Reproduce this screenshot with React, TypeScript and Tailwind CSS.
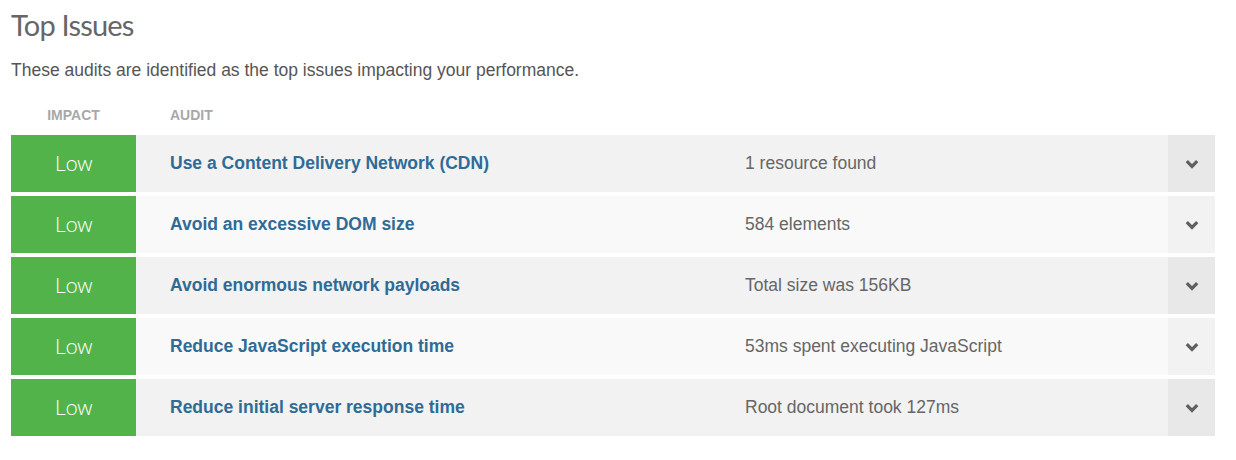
import React from "react";

const rows = [
  { title: "Use a Content Delivery Network (CDN)", detail: "1 resource found" },
  { title: "Avoid an excessive DOM size", detail: "584 elements" },
  { title: "Avoid enormous network payloads", detail: "Total size was 156KB" },
  { title: "Reduce JavaScript execution time", detail: "53ms spent executing JavaScript" },
  { title: "Reduce initial server response time", detail: "Root document took 127ms" },
];

function Chevron() {
  return (
    <svg width="14" height="10" viewBox="0 0 14 10">
      <path d="M1.8 2.2 L7 7.4 L12.2 2.2" fill="none" stroke="#5f5f5f" strokeWidth="3.2" />
    </svg>
  );
}

export default function App() {
  return (
    <div className="w-[1236px] h-[460px] bg-white pl-[11px] pr-[21px] pt-[7px]" style={{ fontFamily: "'Liberation Sans', Arial, sans-serif" }}>
      <h1 className="text-[29px] leading-[36px] text-[#666] font-normal tracking-[-0.8px]" style={{ fontFamily: "Lato, sans-serif" }}>
        Top Issues
      </h1>
      <p className="mt-[17px] text-[17.5px] leading-[20px] text-[#555]">
        These audits are identified as the top issues impacting your performance.
      </p>
      <div className="mt-[20px] flex h-[35px] pb-[5px] items-center text-[14px] font-bold text-[#a8a8a8]">
        <div className="w-[125px] text-center">IMPACT</div>
        <div className="pl-[34px]">AUDIT</div>
      </div>
      <div className="flex flex-col gap-[4px]">
        {rows.map((r, i) => {
          const odd = i % 2 === 0;
          return (
            <div key={i} className={`flex h-[57px] items-center ${odd ? "bg-[#f2f2f2]" : "bg-[#f9f9f9]"}`}>
              <div className="flex h-full w-[125px] items-center justify-center bg-[#52b34a] text-[21px] font-light text-white" style={{ fontFamily: "'Open Sans', sans-serif", letterSpacing: "-0.5px" }}>
                Low
              </div>
              <div className="w-[575px] pl-[34px] text-[17.5px] font-bold text-[#2e6b96]">{r.title}</div>
              <div className="flex-1 pl-[34px] text-[17.5px] text-[#666]">{r.detail}</div>
              <div className={`flex h-full w-[47px] items-center justify-center ${odd ? "bg-[#e8e8e8]" : "bg-[#f2f2f2]"}`}>
                <Chevron />
              </div>
            </div>
          );
        })}
      </div>
    </div>
  );
}
